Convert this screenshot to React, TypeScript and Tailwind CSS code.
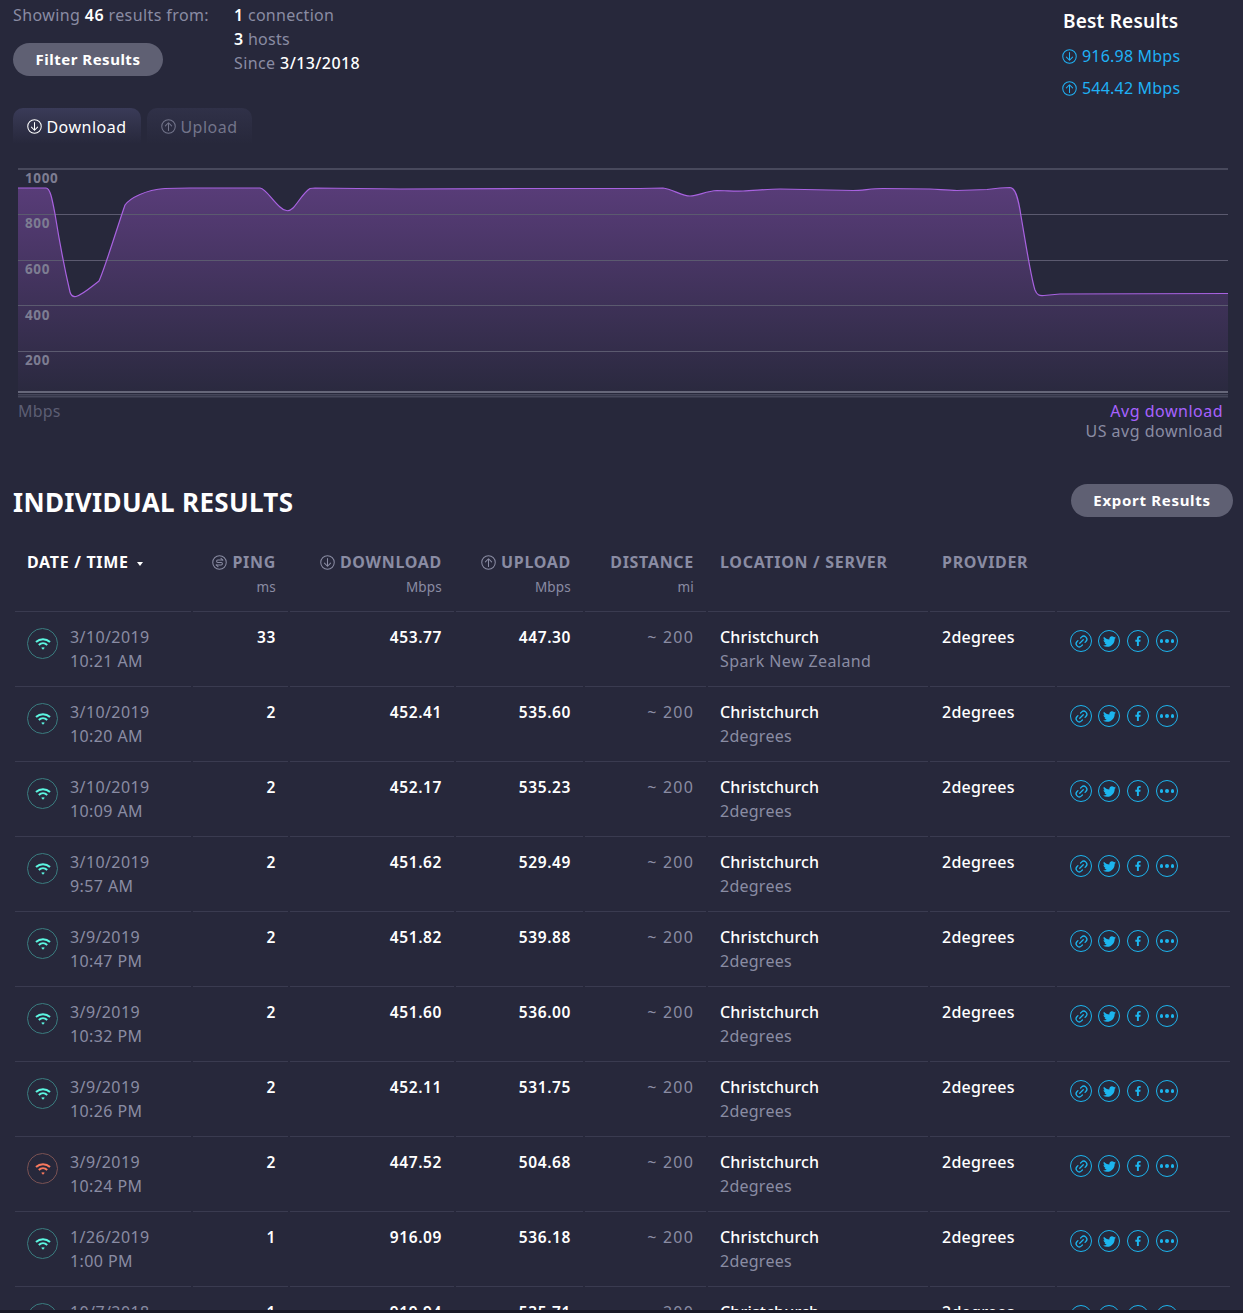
import type { ReactNode } from "react";
import { Link2 } from "lucide-react";
import { FaFacebookF, FaTwitter } from "react-icons/fa";

const ROW_GRID =
  "grid grid-cols-[176px_95px_164px_127px_121px_220px_125px_173px] gap-x-[2px] ml-[15px]";

const RESULTS = [
  { date: "3/10/2019", time: "10:21 AM", ping: "33", down: "453.77", up: "447.30", sponsor: "Spark New Zealand" },
  { date: "3/10/2019", time: "10:20 AM", ping: "2", down: "452.41", up: "535.60", sponsor: "2degrees" },
  { date: "3/10/2019", time: "10:09 AM", ping: "2", down: "452.17", up: "535.23", sponsor: "2degrees" },
  { date: "3/10/2019", time: "9:57 AM", ping: "2", down: "451.62", up: "529.49", sponsor: "2degrees" },
  { date: "3/9/2019", time: "10:47 PM", ping: "2", down: "451.82", up: "539.88", sponsor: "2degrees" },
  { date: "3/9/2019", time: "10:32 PM", ping: "2", down: "451.60", up: "536.00", sponsor: "2degrees" },
  { date: "3/9/2019", time: "10:26 PM", ping: "2", down: "452.11", up: "531.75", sponsor: "2degrees" },
  { date: "3/9/2019", time: "10:24 PM", ping: "2", down: "447.52", up: "504.68", sponsor: "2degrees", slow: true },
  { date: "1/26/2019", time: "1:00 PM", ping: "1", down: "916.09", up: "536.18", sponsor: "2degrees" },
  { date: "10/7/2018", time: "10:00 AM", ping: "1", down: "919.94", up: "535.71", sponsor: "2degrees" },
];

const CURVE =
  "M18 188 L46 188 C50 188 52 198 55 214 C60 245 66 275 70 292 C71 296 73 297 76 296.5 C82 295 90 288 99 281 C105 268 118 225 125 205 C130 198 145 190 165 188.5 L190 188 L260 188 C266 189 272 200 280 207 C284 211 289 212 293 208 C298 203 303 193 310 188.5 L315 188 L400 189 L520 188.5 L640 188.5 L663 188 C672 189 682 196 690 196 C698 196 706 191 717 190.5 C726 190.5 735 191.5 743 191 C755 190.5 768 189 780 189 L853 190.5 C862 190.5 872 188.5 883 188.5 L930 189 C940 189.5 948 190.5 957 190.5 L987 189.5 L1000 188 L1010 187.5 C1015 187.5 1018 196 1021 216 C1026 245 1031 278 1035 290 C1037 295 1039 296 1044 295.5 L1060 294 L1228 293.5";

function ArrowCircle({ dir, className }: { dir: "down" | "up"; className: string }) {
  return (
    <svg viewBox="0 0 16 16" fill="none" stroke="currentColor" strokeWidth="1.1" className={className}>
      <circle cx="8" cy="8" r="7.2" />
      {dir === "down" ? (
        <path d="M8 3.8v8.2M4.7 8.7 8 12l3.3-3.3" strokeLinecap="round" strokeLinejoin="round" />
      ) : (
        <path d="M8 12.2V4M4.7 7.3 8 4l3.3 3.3" strokeLinecap="round" strokeLinejoin="round" />
      )}
    </svg>
  );
}

function PingIcon() {
  return (
    <svg viewBox="0 0 16 16" fill="none" stroke="currentColor" strokeWidth="1.1" className="h-[15px] w-[15px]">
      <circle cx="8" cy="8" r="7.2" />
      <path d="M11.5 5.4H6.2a1.3 1.3 0 0 0 0 2.6h3.6a1.3 1.3 0 0 1 0 2.6H4.5" strokeLinecap="round" />
      <path d="M9.6 3.6 11.5 5.4M6.4 12.4 4.5 10.6" strokeLinecap="round" />
    </svg>
  );
}

function WifiBadge({ slow }: { slow?: boolean }) {
  return (
    <div
      className={`flex h-[31px] w-[31px] shrink-0 items-center justify-center rounded-full border ${
        slow ? "border-[#7a5253] text-[#f9795e]" : "border-[#3a7c7f] text-[#5cf5e0]"
      }`}
    >
      <svg viewBox="0 0 16 14" fill="none" stroke="currentColor" strokeWidth="2" strokeLinecap="butt" className="h-[14px] w-[16px]">
        <path d="M1 5C5 1.2 11 1.2 15 5" />
        <path d="M3.8 8C6.2 5.8 9.8 5.8 12.2 8" />
        <path d="M6.2 10.8 8 12.8l1.8-2C8.8 9.9 7.2 9.9 6.2 10.8Z" fill="currentColor" stroke="none" />
      </svg>
    </div>
  );
}

function ShareIcons() {
  const circle =
    "flex h-[22px] w-[22px] items-center justify-center rounded-full border-[1.5px] border-[#1cb5ee] text-[#1cb5ee]";
  return (
    <div className="ml-[13px] mt-[18px] flex">
      <span className={circle}>
        <Link2 className="h-[15px] w-[15px] -rotate-45" strokeWidth={2} />
      </span>
      <span className={`${circle} ml-[6px]`}>
        <FaTwitter className="h-[13px] w-[13px]" />
      </span>
      <span className={`${circle} ml-[7px]`}>
        <FaFacebookF className="h-[10px] w-[10px]" />
      </span>
      <span className={`${circle} ml-[7px] gap-[2px]`}>
        <i className="h-[3.5px] w-[3.5px] rounded-full bg-[#1cb5ee]" />
        <i className="h-[3.5px] w-[3.5px] rounded-full bg-[#1cb5ee]" />
        <i className="h-[3.5px] w-[3.5px] rounded-full bg-[#1cb5ee]" />
      </span>
    </div>
  );
}

function Chart() {
  return (
    <div className="relative ml-[18px] mt-[24px] h-[232px] w-[1210px] overflow-hidden">
      <svg viewBox="18 168 1210 232" className="block h-[232px] w-[1210px]">
        <defs>
          <linearGradient id="area" x1="0" y1="188" x2="0" y2="395" gradientUnits="userSpaceOnUse">
            <stop offset="0" stopColor="#583c78" />
            <stop offset="1" stopColor="#583c78" stopOpacity="0.05" />
          </linearGradient>
        </defs>
        <path d={`${CURVE} L1228 392 L18 392 Z`} fill="url(#area)" />
        <path d="M18 169H1228" stroke="#48495c" strokeWidth="2" />
        <path d="M18 214.5H1228M18 260.5H1228M18 305.5H1228M18 351.5H1228" stroke="#5b5a6f" strokeWidth="1" />
        <path d={CURVE} fill="none" stroke="#a862e0" strokeWidth="1.2" />
        <path d="M18 392H1228" stroke="#66677a" strokeWidth="2" />
        <path d="M18 394.5H1228" stroke="#45465a" strokeWidth="1" />
        <path d="M18 396.5H1228" stroke="#45465a" strokeWidth="2" />
      </svg>
      {[
        { label: "1000", cls: "top-[2px]" },
        { label: "800", cls: "top-[47px]" },
        { label: "600", cls: "top-[93px]" },
        { label: "400", cls: "top-[139px]" },
        { label: "200", cls: "top-[184px]" },
      ].map((tick) => (
        <span
          key={tick.label}
          className={`absolute left-[7px] text-[13.5px] font-bold leading-[16px] tracking-[0.6px] text-[#7d7d92] ${tick.cls}`}
        >
          {tick.label}
        </span>
      ))}
    </div>
  );
}

function HeaderCell({
  children,
  unit,
  icon,
  left,
  light,
}: {
  children: ReactNode;
  unit?: string;
  icon?: ReactNode;
  left?: boolean;
  light?: boolean;
}) {
  return (
    <div className={`h-[60px] border-b border-[#3a3b50] ${left ? "pl-[12px]" : "pr-[12px] text-right"}`}>
      <p
        className={`flex h-[20px] items-center gap-[5px] text-[16px] font-bold leading-[20px] tracking-[0.7px] ${
          left ? "justify-start" : "justify-end"
        } ${light ? "text-white" : ""}`}
      >
        {icon}
        <span className="whitespace-nowrap">{children}</span>
      </p>
      {unit && <p className="mt-[5px] text-[13.5px] leading-[20px] tracking-[0.2px]">{unit}</p>}
    </div>
  );
}

function Num({ children }: { children: ReactNode }) {
  return (
    <div className="h-[75px] border-b border-[#3a3b50] pr-[12px] pt-[13px] text-right text-[15.5px] font-semibold leading-[24px] tracking-[0.6px] text-white">
      {children}
    </div>
  );
}

export default function App() {
  return (
    <div className="h-[1313px] w-[1243px] overflow-hidden bg-[#1a1a26]">
      <div className="h-[1310px] overflow-hidden bg-[#27283b] font-[family-name:Inter,'Open_Sans',sans-serif] tracking-[0.4px] text-[#8a8ca3]">
        <div className="flex h-[108px]">
          <div className="ml-[13px] w-[221px]">
            <p className="pt-[5px] text-[16px] leading-[20px] whitespace-nowrap">
              Showing <b className="font-semibold text-white">46</b> results from:
            </p>
            <button className="mt-[18px] h-[33px] w-[150px] rounded-full bg-[#5f6073] text-[15px] font-bold tracking-[0.5px] text-white">
              Filter Results
            </button>
          </div>
          <div className="pt-[3px] text-[16px] leading-[24px]">
            <p className="tracking-[0.3px]"><b className="font-semibold text-white">1</b> connection</p>
            <p className="tracking-[0.3px]"><b className="font-semibold text-white">3</b> hosts</p>
            <p>Since <span className="font-medium text-white">3/13/2018</span></p>
          </div>
          <div className="ml-auto mr-[59px] w-[122px] text-[16px] tracking-[0.2px] text-[#1fb1f5]">
            <p className="pl-[1px] pt-[10px] text-[19px] font-semibold leading-[22px] text-white whitespace-nowrap">Best Results</p>
            <p className="mt-[14px] flex h-[20px] items-center gap-[5px] whitespace-nowrap">
              <ArrowCircle dir="down" className="h-[15px] w-[15px]" /> 916.98 Mbps
            </p>
            <p className="mt-[12px] flex h-[20px] items-center gap-[5px] whitespace-nowrap">
              <ArrowCircle dir="up" className="h-[15px] w-[15px]" /> 544.42 Mbps
            </p>
          </div>
        </div>

        <div className="ml-[13px] flex gap-[6px]">
          <div className="flex h-[36px] w-[128px] items-center justify-center gap-[4px] rounded-t-[10px] bg-gradient-to-b from-[#3a3b58] to-[#27283b] pt-[2px] text-[16px] tracking-[0.5px] text-white">
            <ArrowCircle dir="down" className="-mt-[2px] h-[15px] w-[15px]" /> Download
          </div>
          <div className="flex h-[36px] w-[105px] items-center justify-center gap-[4px] rounded-t-[10px] bg-gradient-to-b from-[#303148] to-[#27283b] pt-[2px] text-[16px] tracking-[0.5px] text-[#73758b]">
            <ArrowCircle dir="up" className="-mt-[2px] h-[15px] w-[15px]" /> Upload
          </div>
        </div>

        <Chart />

        <div className="flex h-[44px] justify-between pl-[18px] pr-[20px] pt-[1px] text-[16px] leading-[20px]">
          <span className="tracking-[0.2px] text-[#5c5e73]">Mbps</span>
          <div className="text-right tracking-[0.5px]">
            <p className="text-[#a762ff]">Avg download</p>
            <p>US avg download</p>
          </div>
        </div>

        <div className="mt-[40px] flex h-[33px] items-center justify-between pl-[13px] pr-[10px]">
          <h2 className="pt-[4px] text-[26px] font-bold tracking-[0.35px] text-white">INDIVIDUAL RESULTS</h2>
          <button className="h-[33px] w-[162px] rounded-full bg-[#5f6073] text-[15px] font-bold tracking-[0.7px] text-white">
            Export Results
          </button>
        </div>

        <div className={`${ROW_GRID} mt-[35px]`}>
          <HeaderCell left light>
            DATE / TIME
            <i className="ml-[8px] inline-block h-0 w-0 border-x-[3.5px] border-t-[4px] border-x-transparent border-t-white align-middle" />
          </HeaderCell>
          <HeaderCell unit="ms" icon={<PingIcon />}>PING</HeaderCell>
          <HeaderCell unit="Mbps" icon={<ArrowCircle dir="down" className="h-[15px] w-[15px]" />}>DOWNLOAD</HeaderCell>
          <HeaderCell unit="Mbps" icon={<ArrowCircle dir="up" className="h-[15px] w-[15px]" />}>UPLOAD</HeaderCell>
          <HeaderCell unit="mi">DISTANCE</HeaderCell>
          <HeaderCell left>LOCATION / SERVER</HeaderCell>
          <HeaderCell left>PROVIDER</HeaderCell>
          <div className="border-b border-[#3a3b50]" />
        </div>

        {RESULTS.map((r) => (
          <div key={r.date + r.time} className={ROW_GRID}>
            <div className="flex h-[75px] gap-[12px] border-b border-[#3a3b50] pl-[12px] pt-[16px]">
              <WifiBadge slow={r.slow} />
              <div className="-mt-[3px] text-[16px] leading-[24px]">
                <p>{r.date}</p>
                <p>{r.time}</p>
              </div>
            </div>
            <Num>{r.ping}</Num>
            <Num>{r.down}</Num>
            <Num>{r.up}</Num>
            <div className="h-[75px] border-b border-[#3a3b50] pr-[12px] pt-[13px] text-right text-[16px] leading-[24px] tracking-[1.2px]">
              ~ 200
            </div>
            <div className="h-[75px] border-b border-[#3a3b50] pl-[12px] pt-[13px] text-[16px] leading-[24px]">
              <p className="font-medium tracking-[0.15px] text-white">Christchurch</p>
              <p className={r.sponsor === "2degrees" ? "tracking-[0.25px]" : ""}>{r.sponsor}</p>
            </div>
            <div className="h-[75px] border-b border-[#3a3b50] pl-[12px] pt-[13px] text-[16px] font-medium leading-[24px] tracking-[0.25px] text-white">
              2degrees
            </div>
            <div className="h-[75px] border-b border-[#3a3b50]">
              <ShareIcons />
            </div>
          </div>
        ))}
      </div>
    </div>
  );
}
